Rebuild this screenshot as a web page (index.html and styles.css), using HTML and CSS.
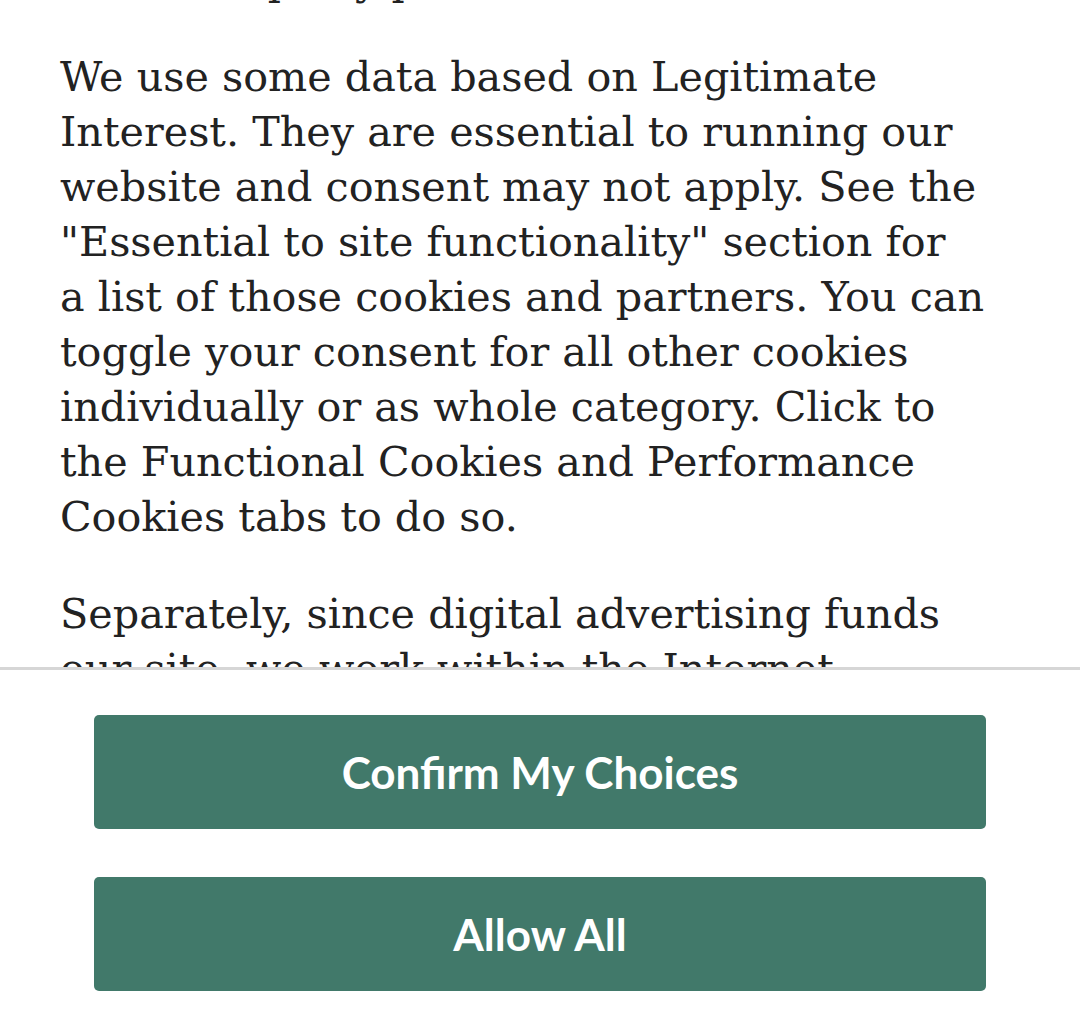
FILE: index.html
```html
<!DOCTYPE html>
<html lang="en">
<head>
  <meta charset="UTF-8">
  <title>Privacy Preferences</title>
  <link rel="stylesheet" href="styles.css">
</head>
<body>

<div class="consent-panel">

  <!-- Scrollable description -->
  <div class="consent-body">
    <p class="cut-line">third party partners.</p>
    <p>We use some data based on Legitimate<br>
      Interest. They are essential to running our<br>
      website and consent may not apply. See the<br>
      "Essential to site functionality" section for<br>
      a list of those cookies and partners. You can<br>
      toggle your consent for all other cookies<br>
      individually or as whole category. Click to<br>
      the Functional Cookies and Performance<br>
      Cookies tabs to do so.</p>
    <p>Separately, since digital advertising funds<br>
      our site, we work within the Internet</p>
  </div>

  <!-- Action buttons -->
  <div class="consent-actions">
    <button class="btn">Confirm My Choices</button>
    <button class="btn">Allow All</button>
  </div>

</div>

</body>
</html>
```

FILE: styles.css
```css
body {
  margin: 0;
  background: #fff;
  height: 100vh;
  overflow: hidden;
}

.consent-panel {
  display: flex;
  flex-direction: column;
  height: 100vh;
}

.consent-body {
  flex: 1;
  overflow: hidden;
  padding: 0 10px 0 60px;
  font-family: 'DejaVu Serif', 'Liberation Serif', serif;
  font-size: 41.3px;
  line-height: 55px;
  color: #222;
  white-space: nowrap;
}

.consent-body p {
  margin: 0 0 42px;
}

.cut-line {
  margin-top: -47px !important;
  padding-left: 92px;
}

.consent-actions {
  border-top: 3px solid #d6d6d6;
  padding: 45px 94px 0;
  display: flex;
  flex-direction: column;
  gap: 48px;
  height: 359px;
  box-sizing: border-box;
  flex-shrink: 0;
}

.btn {
  background-color: #41796a;
  color: #fff;
  border: none;
  border-radius: 5px;
  height: 114px;
  width: 100%;
  flex-shrink: 0;
  font-family: 'Lato', 'Open Sans', sans-serif;
  font-weight: bold;
  font-size: 44px;
  cursor: pointer;
}
```
